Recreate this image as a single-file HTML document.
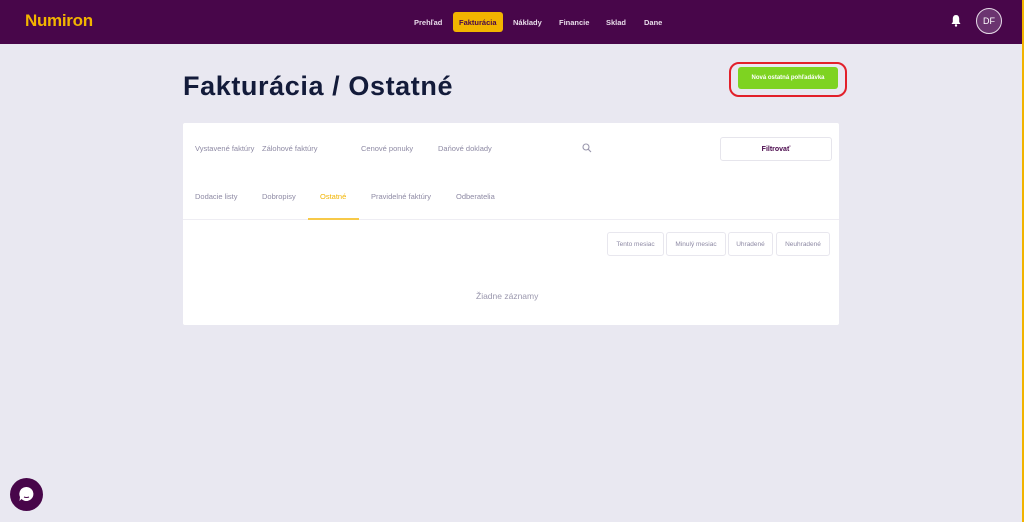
<!DOCTYPE html>
<html><head><meta charset="utf-8"><style>
*{margin:0;padding:0;box-sizing:border-box}
body{width:1024px;height:522px;overflow:hidden;background:#e9e8f1;font-family:"Liberation Sans",sans-serif;position:relative}
.nav{position:absolute;left:0;top:0;width:1022px;height:44px;background:#48064a}
.strip{position:absolute;right:0;top:0;width:2px;height:522px;background:#f2b400}
.logo{position:absolute;left:25px;top:11px;color:#f2b400;font-size:17px;font-weight:bold;letter-spacing:-0.3px}
.menu a{position:absolute;top:12px;height:20px;display:flex;align-items:center;font-size:7.5px;font-weight:bold;color:#e8dcea;padding:0 6px}
.menu a.act{background:#f2b400;color:#48064a;border-radius:3px}
.av{position:absolute;left:976px;top:8px;width:26px;height:26px;border-radius:50%;border:1.5px solid #e6dbe8;background:#6b3470;color:#fff;font-size:9px;display:flex;align-items:center;justify-content:center}
h1{position:absolute;left:183px;top:71px;font-size:27px;color:#131b3a;font-weight:bold;letter-spacing:0.6px}
.ring{position:absolute;left:729px;top:62px;width:118px;height:35px;border:2px solid #e2202a;border-radius:10px}
.btn{position:absolute;left:738px;top:67px;width:100px;height:22px;background:#7ed321;border-radius:3px;color:#fff;font-size:6px;font-weight:bold;display:flex;align-items:center;justify-content:center}
.card{position:absolute;left:183px;top:123px;width:656px;height:202px;background:#fff;border-radius:2px}
.t{position:absolute;font-size:7.5px;color:#8e8aa4}
.line{position:absolute;left:0;top:96px;width:656px;height:1px;background:#eeedf3}
.ul{position:absolute;left:125px;top:95px;width:51px;height:2px;background:#f7c948}
.f{position:absolute;left:537px;top:14px;width:112px;height:24px;border:1px solid #e6e5ec;border-radius:3px;font-size:7px;font-weight:bold;color:#48064a;display:flex;align-items:center;justify-content:center}
.pill{position:absolute;top:109px;height:24px;border:1px solid #e8e7ee;border-radius:3px;font-size:6.5px;color:#8e8aa4;display:flex;align-items:center;justify-content:center}
.chat{position:absolute;left:10px;top:478px;width:33px;height:33px;border-radius:50%;background:#48064a}
</style></head><body>
<div class="nav">
<div class="logo">Numiron</div>
<div class="menu">
<a style="left:408px">Prehľad</a>
<a class="act" style="left:453px">Fakturácia</a>
<a style="left:507px">Náklady</a>
<a style="left:553px">Financie</a>
<a style="left:600px">Sklad</a>
<a style="left:638px">Dane</a>
</div>
<svg style="position:absolute;left:950px;top:14px" width="12" height="13" viewBox="0 0 12 13"><path d="M6 1C3.8 1 2.8 2.8 2.8 4.8V8L1.5 10H10.5L9.2 8V4.8C9.2 2.8 8.2 1 6 1Z" fill="#fff"/><circle cx="6" cy="11.5" r="1.2" fill="#fff"/></svg>
<div class="av">DF</div>
</div>
<div class="strip"></div>
<h1>Fakturácia / Ostatné</h1>
<div class="ring"></div>
<div class="btn">Nová ostatná pohľadávka</div>
<div class="card">
<div class="t" style="left:12px;top:21px">Vystavené faktúry</div>
<div class="t" style="left:79px;top:21px">Zálohové faktúry</div>
<div class="t" style="left:178px;top:21px">Cenové ponuky</div>
<div class="t" style="left:255px;top:21px">Daňové doklady</div>
<svg style="position:absolute;left:399px;top:20px" width="10" height="10" viewBox="0 0 10 10"><circle cx="4" cy="4" r="3" fill="none" stroke="#9a97ad" stroke-width="1.1"/><path d="M6.2 6.2L9 9" stroke="#9a97ad" stroke-width="1.1"/></svg>
<div class="f">Filtrovať</div>
<div class="t" style="left:12px;top:69px">Dodacie listy</div>
<div class="t" style="left:79px;top:69px">Dobropisy</div>
<div class="t" style="left:137px;top:69px;color:#f2b400">Ostatné</div>
<div class="t" style="left:188px;top:69px">Pravidelné faktúry</div>
<div class="t" style="left:273px;top:69px">Odberatelia</div>
<div class="line"></div><div class="ul"></div>
<div class="pill" style="left:424px;width:57px">Tento mesiac</div>
<div class="pill" style="left:483px;width:60px">Minulý mesiac</div>
<div class="pill" style="left:545px;width:45px">Uhradené</div>
<div class="pill" style="left:593px;width:54px">Neuhradené</div>
<div class="t" style="left:293px;top:168px;font-size:8.5px;color:#9a97ad">Žiadne záznamy</div>
</div>
<div class="chat"><svg style="position:absolute;left:7px;top:7px" width="19" height="19" viewBox="0 0 19 19"><path d="M9.5 2A7 7 0 1 1 4.5 14L2.5 16L3 12A7 7 0 0 1 9.5 2Z" fill="#fff"/><path d="M7 12Q9.5 13 12 12" stroke="#48064a" stroke-width="1.1" fill="none"/></svg></div>
</body></html>
